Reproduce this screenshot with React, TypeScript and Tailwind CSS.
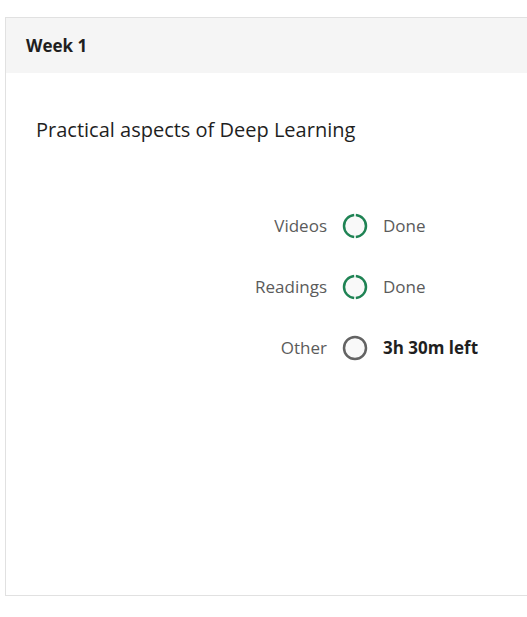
function ProgressRing({ done }: { done: boolean }) {
  if (!done) {
    return (
      <svg width="26" height="26" viewBox="0 0 26 26">
        <circle cx="13" cy="13" r="11" fill="#f9f9f9" stroke="#636363" strokeWidth="2.5" />
      </svg>
    );
  }
  return (
    <svg width="26" height="26" viewBox="0 0 26 26">
      <circle cx="13" cy="13" r="11" fill="#f9f9f9" />
      <path d="M13.8 2.03 A11 11 0 0 1 13.8 23.97" fill="none" stroke="#1f8354" strokeWidth="2.5" />
      <path d="M12.2 23.97 A11 11 0 0 1 12.2 2.03" fill="none" stroke="#1f8354" strokeWidth="2.5" />
    </svg>
  );
}

const rows = [
  { label: 'Videos', done: true, status: 'Done' },
  { label: 'Readings', done: true, status: 'Done' },
  { label: 'Other', done: false, status: '3h 30m left' },
];

export default function App() {
  return (
    <div className="bg-white min-h-[617px] pt-[17px] pl-[5px] font-['Open_Sans',sans-serif]">
      <div className="border border-r-0 border-[#e1e1e1] h-[579px]">
        <div className="bg-[#f5f5f5] h-[55px] flex items-center pl-[20px]">
          <h2 className="text-[17px] font-bold text-[#1f1f1f]">Week 1</h2>
        </div>
        <div className="pt-[44px] pl-[30px]">
          <p className="text-[20px] text-[#1f1f1f] leading-[26px]">Practical aspects of Deep Learning</p>
        </div>
        <div className="mt-[70px] flex flex-col gap-[35px]">
          {rows.map((r) => (
            <div key={r.label} className="flex items-center h-[26px]">
              <span className="w-[321px] text-right text-[17px] text-[#5b5b5b]">{r.label}</span>
              <span className="ml-[15px] flex">
                <ProgressRing done={r.done} />
              </span>
              <span
                className={
                  r.done
                    ? 'ml-[15px] text-[17px] text-[#5b5b5b]'
                    : 'ml-[15px] text-[17px] font-bold text-[#1f1f1f]'
                }
              >
                {r.status}
              </span>
            </div>
          ))}
        </div>
      </div>
    </div>
  );
}
